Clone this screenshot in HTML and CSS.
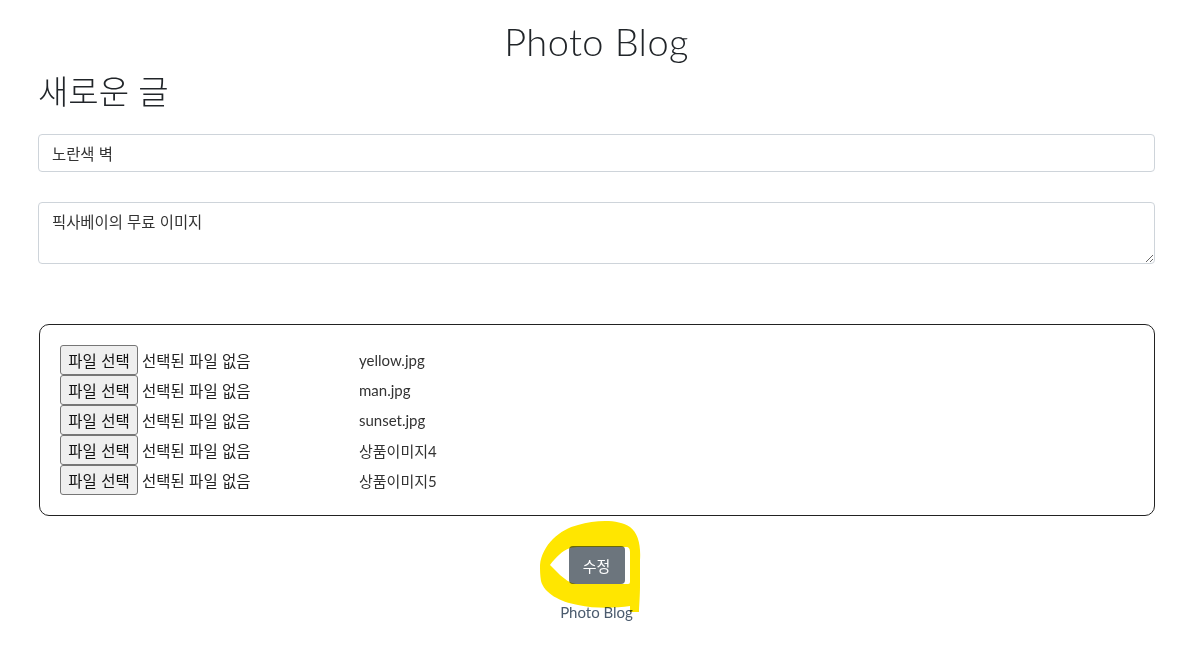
FILE: index.html
```html
<!DOCTYPE html>
<html lang="ko">
<head>
<meta charset="utf-8">
<title>Photo Blog</title>
<link rel="stylesheet" href="styles.css">
</head>
<body>
<header class="site-header">
  <h1 class="site-title">Photo Blog</h1>
</header>
<main class="container">
  <h2 class="page-title">새로운 글</h2>
  <form class="post-form">
    <input class="field field-input" type="text" value="노란색 벽">
    <textarea class="field field-area">픽사베이의 무료 이미지</textarea>
    <div class="file-box">
      <div class="file-row"><span class="file-btn">파일 선택</span><span class="file-status">선택된 파일 없음</span><span class="file-name">yellow.jpg</span></div>
      <div class="file-row"><span class="file-btn">파일 선택</span><span class="file-status">선택된 파일 없음</span><span class="file-name">man.jpg</span></div>
      <div class="file-row"><span class="file-btn">파일 선택</span><span class="file-status">선택된 파일 없음</span><span class="file-name">sunset.jpg</span></div>
      <div class="file-row"><span class="file-btn">파일 선택</span><span class="file-status">선택된 파일 없음</span><span class="file-name">상품이미지4</span></div>
      <div class="file-row"><span class="file-btn">파일 선택</span><span class="file-status">선택된 파일 없음</span><span class="file-name">상품이미지5</span></div>
    </div>
    <div class="actions">
      <button type="button" class="btn-submit">수정</button>
      <svg class="highlight" width="120" height="110" viewBox="0 0 120 110" aria-hidden="true">
        <path fill="#ffe600" fill-rule="evenodd" d="M10 50 C12 30 30 14 48 10 C66 5 88 4 100 12 C108 18 111 30 110 45 L110 70 C110 82 109 92 109 97 L100 97 L100 91 C86 93 66 94 48 90 C30 87 14 78 11 66 C10 60 10 55 10 50 Z M20 50 C26 42 32 36 40 33 C43 32 46 32 50 32 L96 32 C99 32 100 34 100 37 L100 66 C100 69 99 69 97 69 L46 69 C40 68 34 64 28 58 Z"/>
      </svg>
    </div>
  </form>
</main>
<footer class="site-footer">Photo Blog</footer>
</body>
</html>
```
FILE: styles.css
```css
* { box-sizing: border-box; }
html, body { margin: 0; padding: 0; background: #fff; }
body {
  font-family: Lato, "Noto Sans CJK KR", sans-serif;
  color: #212529;
}
.site-header { display: flex; justify-content: center; padding-top: 14px; }
.site-title {
  margin: 0;
  font-family: Lato, "Noto Sans CJK KR", sans-serif;
  font-weight: 300;
  font-size: 38px;
  line-height: 54px;
  letter-spacing: 0.4px;
}
.container { padding: 0 38px; }
.page-title {
  margin: 2px 0 24px;
  font-family: "Noto Sans CJK KR", sans-serif;
  font-weight: 300;
  font-size: 33px;
  line-height: 40px;
}
.post-form { display: flex; flex-direction: column; }
.field {
  display: block;
  width: 100%;
  border: 1px solid #ced4da;
  border-radius: 4px;
  padding: 6px 13px;
  font-family: "Noto Sans CJK KR", sans-serif;
  font-size: 15.4px;
  color: #333;
  background: #fff;
}
.field-input { height: 38px; line-height: 24px; }
.field-area { height: 62px; margin-top: 30px; resize: vertical; line-height: 22px; padding-top: 7px; }
.file-box {
  margin: 60px 0 0 1px;
  border: 1px solid #222;
  border-radius: 10px;
  padding: 20px 20px;
  display: flex;
  flex-direction: column;
}
.file-row { display: flex; align-items: center; height: 30px; }
.file-btn {
  display: inline-flex; align-items: center; justify-content: center;
  width: 78px; height: 30px;
  background: #efefef;
  border: 1px solid #767676;
  border-radius: 3px;
  font-family: "Noto Sans CJK KR", sans-serif;
  font-size: 15.5px;
  color: #111;
  white-space: nowrap;
}
.file-status {
  margin-left: 4px;
  width: 217px;
  font-family: "Noto Sans CJK KR", sans-serif;
  font-size: 15.5px;
  color: #222;
}
.file-name {
  font-family: Lato, "Noto Sans CJK KR", sans-serif;
  font-size: 15px;
  color: #333;
}
.actions { position: relative; display: flex; justify-content: center; margin-top: 30px; }
.btn-submit {
  width: 56px; height: 38px;
  border: none; border-radius: 4px;
  background: #6c757d; color: #fff;
  font-family: "Noto Sans CJK KR", sans-serif;
  font-size: 15px;
}
.highlight {
  position: absolute;
  left: 492px; top: -31px;
  mix-blend-mode: multiply;
  pointer-events: none;
}
.site-footer {
  text-align: center;
  margin-top: 19px;
  font-family: Lato, "Noto Sans CJK KR", sans-serif;
  font-size: 15px;
  color: #4b5b6e;
}
```
